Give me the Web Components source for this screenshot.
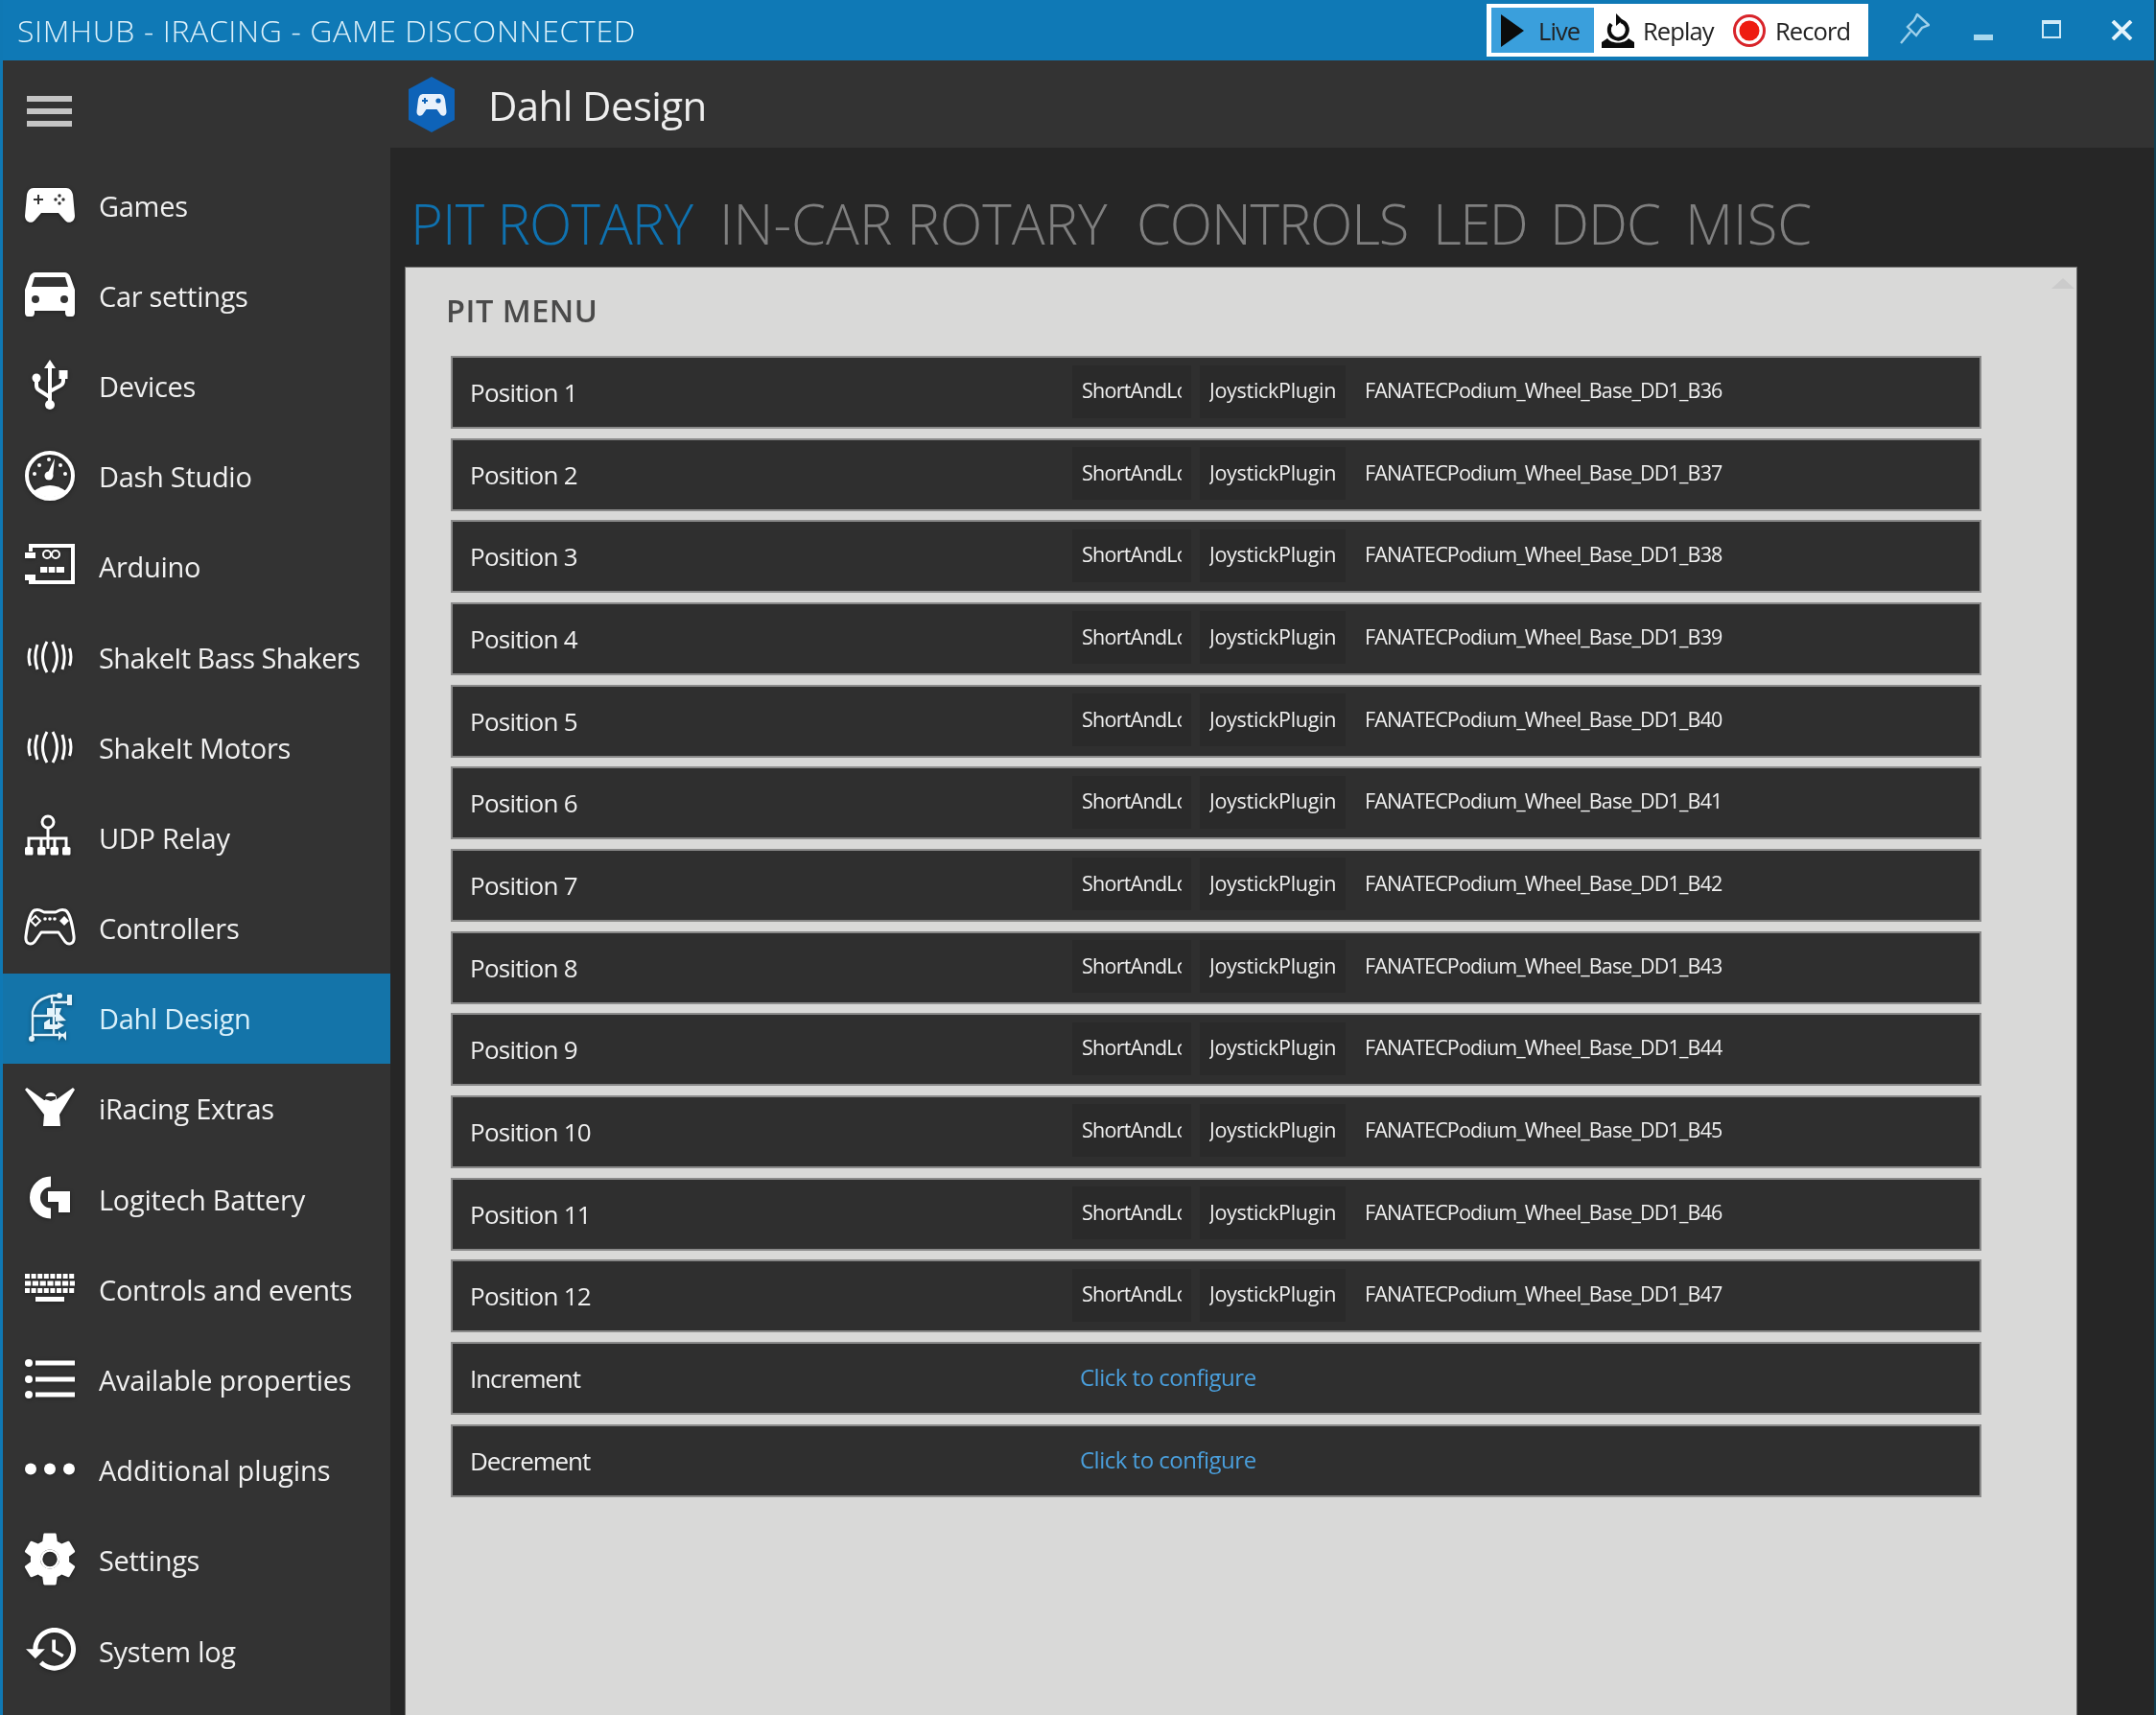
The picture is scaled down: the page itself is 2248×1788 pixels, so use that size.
<!DOCTYPE html>
<html>
<head>
<meta charset="utf-8">
<title>SimHub</title>
<style>
  html, body { margin: 0; padding: 0; background: #262626; overflow: hidden; }
  body { font-family: "Open Sans", "Liberation Sans", sans-serif; }
</style>
</head>
<body>

<sim-app>
  <sim-titlebar slot="top" title-text="SIMHUB - IRACING - GAME DISCONNECTED"></sim-titlebar>

  <sim-sidebar slot="side">
    <sim-nav-item icon="games">Games</sim-nav-item>
    <sim-nav-item icon="car">Car settings</sim-nav-item>
    <sim-nav-item icon="usb">Devices</sim-nav-item>
    <sim-nav-item icon="gauge">Dash Studio</sim-nav-item>
    <sim-nav-item icon="arduino">Arduino</sim-nav-item>
    <sim-nav-item icon="shake" style="letter-spacing:-0.6px">ShakeIt Bass Shakers</sim-nav-item>
    <sim-nav-item icon="shake">ShakeIt Motors</sim-nav-item>
    <sim-nav-item icon="network">UDP Relay</sim-nav-item>
    <sim-nav-item icon="controller">Controllers</sim-nav-item>
    <sim-nav-item icon="dahl" selected>Dahl Design</sim-nav-item>
    <sim-nav-item icon="iracing">iRacing Extras</sim-nav-item>
    <sim-nav-item icon="logitech">Logitech Battery</sim-nav-item>
    <sim-nav-item icon="keyboard">Controls and events</sim-nav-item>
    <sim-nav-item icon="list">Available properties</sim-nav-item>
    <sim-nav-item icon="dots" style="letter-spacing:-0.05px">Additional plugins</sim-nav-item>
    <sim-nav-item icon="gear">Settings</sim-nav-item>
    <sim-nav-item icon="history">System log</sim-nav-item>
  </sim-sidebar>

  <sim-page-header slot="head">Dahl Design</sim-page-header>

  <sim-tabs slot="tabs">
    <span class="active">PIT ROTARY</span>
    <span style="letter-spacing:0">IN-CAR ROTARY</span>
    <span style="letter-spacing:-1.2px">CONTROLS</span>
    <span style="letter-spacing:-1.5px">LED</span>
    <span>DDC</span>
    <span style="letter-spacing:0">MISC</span>
  </sim-tabs>

  <sim-panel slot="panel" heading="PIT MENU">
    <sim-row key="FANATECPodium_Wheel_Base_DD1_B36">Position 1</sim-row>
    <sim-row key="FANATECPodium_Wheel_Base_DD1_B37">Position 2</sim-row>
    <sim-row key="FANATECPodium_Wheel_Base_DD1_B38">Position 3</sim-row>
    <sim-row key="FANATECPodium_Wheel_Base_DD1_B39">Position 4</sim-row>
    <sim-row key="FANATECPodium_Wheel_Base_DD1_B40">Position 5</sim-row>
    <sim-row key="FANATECPodium_Wheel_Base_DD1_B41">Position 6</sim-row>
    <sim-row key="FANATECPodium_Wheel_Base_DD1_B42">Position 7</sim-row>
    <sim-row key="FANATECPodium_Wheel_Base_DD1_B43">Position 8</sim-row>
    <sim-row key="FANATECPodium_Wheel_Base_DD1_B44">Position 9</sim-row>
    <sim-row key="FANATECPodium_Wheel_Base_DD1_B45">Position 10</sim-row>
    <sim-row key="FANATECPodium_Wheel_Base_DD1_B46">Position 11</sim-row>
    <sim-row key="FANATECPodium_Wheel_Base_DD1_B47">Position 12</sim-row>
    <sim-row>Increment</sim-row>
    <sim-row>Decrement</sim-row>
  </sim-panel>
</sim-app>

<script>
// icons are drawn in a 60x60 box, 1 unit = 1px
const BG = '#333333';
const GAMEPAD_BODY = 'M13 12H47C51 12 53 15 54 19L56 41C56 47 50 50 46 46L39 38H21L14 46C10 50 4 47 4 41L6 19C7 15 9 12 13 12Z';

const ICONS = {
  games: `
    <path fill="#fff" d="${GAMEPAD_BODY}"/>
    <path stroke="${BG}" stroke-width="2" d="M18 19V29M13 24H23"/>
    <g fill="${BG}"><circle cx="40" cy="20" r="1.7"/><circle cx="40" cy="28" r="1.7"/><circle cx="36" cy="24" r="1.7"/><circle cx="44" cy="24" r="1.7"/></g>`,
  car: `
    <path fill="#fff" d="M15 6H45C48 6 50 8 51 10L56 24V48C56 50 55 52 53 52H49C47 52 46 50 46 48V46H14V48C14 50 13 52 11 52H7C5 52 4 50 4 48V24L9 10C10 8 12 6 15 6Z"/>
    <path fill="${BG}" d="M14 11H46L49 21H11Z"/>
    <circle cx="15" cy="34" r="4" fill="${BG}"/><circle cx="45" cy="34" r="4" fill="${BG}"/>`,
  usb: `
    <path fill="#fff" d="M30 3L36 12H24Z"/>
    <g fill="none" stroke="#fff" stroke-width="4">
      <path d="M30 10V48"/>
      <path d="M30 42L19 35C17 34 16 32 16 30V24"/>
      <path d="M30 36L41 30C43 29 44 27 44 25V20"/>
    </g>
    <circle cx="30" cy="50" r="5" fill="#fff"/>
    <circle cx="16" cy="22" r="4.5" fill="#fff"/>
    <rect x="39.5" y="14" width="9" height="9" fill="#fff"/>`,
  gauge: `
    <circle cx="30" cy="29" r="24" fill="none" stroke="#fff" stroke-width="4"/>
    <path fill="#fff" d="M13 45Q30 33 47 45Q30 58 13 45Z"/>
    <path fill="#fff" d="M35 11L33 30H26Z"/>
    <circle cx="29" cy="29" r="4.5" fill="#fff"/>
    <g fill="#fff"><circle cx="14" cy="27" r="2"/><circle cx="19" cy="18" r="2"/><circle cx="29" cy="12" r="2"/><circle cx="41" cy="18" r="2"/><circle cx="46" cy="27" r="2"/></g>`,
  arduino: `
    <path fill="none" stroke="#fff" stroke-width="4" d="M10 14V8H54V46H10V40"/>
    <rect x="4" y="15" width="11" height="6" fill="#fff"/>
    <rect x="4" y="38" width="11" height="6" fill="#fff"/>
    <g fill="none" stroke="#fff" stroke-width="2"><circle cx="27" cy="17" r="4"/><circle cx="36" cy="17" r="4"/></g>
    <rect x="20" y="30" width="25" height="6" fill="#fff"/>
    <path stroke="${BG}" stroke-width="1.5" d="M28 30V36M36 30V36"/>`,
  shake: `
    <g fill="none" stroke="#fff" stroke-width="3">
      <path d="M9.5 21Q6.5 30 9.5 39"/><path d="M17 17Q12.5 30 17 43"/><path d="M27 14Q18 30 27 46"/>
      <path d="M33 14Q42 30 33 46"/><path d="M43 17Q47.5 30 43 43"/><path d="M50.5 21Q53.5 30 50.5 39"/>
    </g>`,
  network: `
    <circle cx="28" cy="14" r="6" fill="none" stroke="#fff" stroke-width="3"/>
    <g fill="none" stroke="#fff" stroke-width="3"><path d="M28 20V42"/><path d="M8 42V31H47V42"/><path d="M21 42V31M35 42V31"/></g>
    <g fill="#fff"><rect x="4" y="40" width="8.5" height="8.5" rx="1.5"/><rect x="17" y="40" width="8.5" height="8.5" rx="1.5"/><rect x="30.5" y="40" width="8.5" height="8.5" rx="1.5"/><rect x="43" y="40" width="8.5" height="8.5" rx="1.5"/></g>`,
  controller: `
    <path fill="none" stroke="#fff" stroke-width="3" stroke-linejoin="round" d="M14 11C20 9 22 13 24 13H36C38 13 40 9 46 11C51 13 54 30 55 38C56 46 50 48 46 44L39 34H21L14 44C10 48 4 46 5 38C6 30 9 13 14 11Z"/>
    <path fill="none" stroke="#fff" stroke-width="2" d="M15 17L20 22L15 27L10 22Z"/>
    <path fill="#fff" d="M45 17L50 22L45 27L40 22Z"/>
    <g fill="#fff"><circle cx="25" cy="20" r="1.8"/><circle cx="30" cy="20" r="1.8"/><circle cx="35" cy="20" r="1.8"/></g>`,
  dahl: `
    <g fill="none" stroke="#e6f4fb" stroke-width="2.4">
      <path d="M12 50V23C14 14 22 8 33 6H40"/>
      <path d="M12 47H44"/>
      <path d="M12 27H36"/>
      <path d="M32 7V13H50"/>
      <path d="M34 14V46"/>
    </g>
    <g fill="#e6f4fb">
      <circle cx="40" cy="6" r="3"/>
      <path d="M48 5H53V16H48Z"/>
      <rect x="27" y="19" width="8" height="8"/>
      <path d="M36 19H42L40 25L47 32L36 33Z"/>
      <path d="M24 34L30 30V36H38V33L45 37L38 41H24Z"/>
      <path d="M39 43L43 47L47 43V53L43 48L39 53Z"/>
      <circle cx="11" cy="51" r="3"/>
    </g>`,
  iracing: `
    <path fill="#fff" d="M4 10L6 8L24 21H36L54 8L56 10L40 36L41 48H23L24 36Z"/>
    <circle cx="31" cy="19" r="6" fill="#fff"/>
    <path fill="${BG}" d="M25 17H36V20L31 22L25 20Z"/>`,
  logitech: `
    <path fill="none" stroke="#fff" stroke-width="11" d="M31 12A16.5 16.5 0 0 0 31 45"/>
    <path fill="#fff" d="M28 22H51V44H39V33H28Z"/>`,
  keyboard: `
    <g fill="none" stroke="#fff" stroke-width="5">
      <path stroke-dasharray="5 1.6" d="M4 16.5H56"/>
      <path stroke-dasharray="6.2 1.6" d="M4 24H56"/>
      <path stroke-dasharray="5 1.6" d="M4 31.5H56"/>
      <path d="M15 40.5H45"/>
    </g>`,
  list: `
    <g fill="#fff"><circle cx="8" cy="12" r="4"/><circle cx="8" cy="29" r="4"/><circle cx="8" cy="45" r="4"/>
    <rect x="15" y="9.5" width="41" height="5"/><rect x="15" y="26.5" width="41" height="5"/><rect x="15" y="42.5" width="41" height="5"/></g>`,
  dots: `
    <g fill="#fff"><circle cx="10" cy="28.5" r="6"/><circle cx="30" cy="28.5" r="6"/><circle cx="50" cy="28.5" r="6"/></g>`,
  gear: `
    <path fill="#fff" transform="translate(-3.6 -5.1) scale(2.8)" d="M19.14 12.94c.04-.3.06-.61.06-.94 0-.32-.02-.64-.07-.94l2.03-1.58c.18-.14.23-.41.12-.61l-1.92-3.32c-.12-.22-.37-.29-.59-.22l-2.39.96c-.5-.38-1.03-.7-1.62-.94l-.36-2.54c-.04-.24-.24-.41-.48-.41h-3.84c-.24 0-.43.17-.47.41l-.36 2.54c-.59.24-1.13.57-1.62.94l-2.39-.96c-.22-.08-.47 0-.59.22L2.74 8.87c-.12.21-.08.47.12.61l2.03 1.58c-.05.3-.09.63-.09.94s.02.64.07.94l-2.03 1.58c-.18.14-.23.41-.12.61l1.92 3.32c.12.22.37.29.59.22l2.39-.96c.5.38 1.03.7 1.62.94l.36 2.54c.05.24.24.41.48.41h3.84c.24 0 .44-.17.47-.41l.36-2.54c.59-.24 1.13-.56 1.62-.94l2.39.96c.22.08.47 0 .59-.22l1.92-3.32c.12-.22.07-.47-.12-.61l-2.01-1.58zM12 15.6c-1.98 0-3.6-1.62-3.6-3.6s1.62-3.6 3.6-3.6 3.6 1.62 3.6 3.6-1.62 3.6-3.6 3.6z"/>
    <circle cx="30" cy="28.5" r="8.9" fill="none" stroke="#fff" stroke-width="2.4"/>`,
  history: `
    <path fill="#fff" transform="translate(2.52 -1.44) scale(2.48)" d="M13 3c-4.97 0-9 4.03-9 9H1l3.89 3.89.07.14L9 12H6c0-3.87 3.13-7 7-7s7 3.13 7 7-3.13 7-7 7c-1.93 0-3.68-.79-4.94-2.06l-1.42 1.42C8.27 19.99 10.51 21 13 21c4.97 0 9-4.03 9-9s-4.03-9-9-9zm-1 5v5l4.28 2.54.72-1.21-3.5-2.08V8H12z"/>`
};

class SimApp extends HTMLElement {
  constructor() {
    super();
    this.attachShadow({ mode: 'open' }).innerHTML = `
      <style>
        :host {
          display: grid;
          width: 2248px;
          height: 1788px;
          box-sizing: border-box;
          border-left: 3px solid #0f78b4;
          border-right: 2px solid #123f52;
          grid-template-columns: 404px 1fr;
          grid-template-rows: 63px 91px 124px 1fr;
          background: #262626;
          overflow: hidden;
          filter: blur(0.5px);
        }
        ::slotted([slot="top"]) { grid-column: 1 / 3; margin-left: -3px; margin-right: -2px; }
        ::slotted([slot="side"]) { grid-row: 2 / 5; }
      </style>
      <slot name="top"></slot>
      <slot name="side"></slot>
      <slot name="head"></slot>
      <slot name="tabs"></slot>
      <slot name="panel"></slot>
    `;
  }
}

class SimTitlebar extends HTMLElement {
  connectedCallback() {
    this.attachShadow({ mode: 'open' }).innerHTML = `
      <style>
        :host { display: flex; align-items: center; height: 63px; background: #0f79b6; color: #dff2fb; }
        .title { flex: 1; padding-left: 18px; font-size: 32px; font-weight: 350; letter-spacing: 0.62px; white-space: nowrap; }
        .modes {
          display: flex; align-items: center; width: 398px; height: 55px; box-sizing: border-box;
          background: #fff; padding: 4px 5px; color: #222; font-size: 25.5px; letter-spacing: -0.9px;
        }
        .mode { display: flex; align-items: center; height: 47px; }
        .live { width: 107px; background: #3a9fdc; box-sizing: border-box; padding-left: 10px; gap: 15px; }
        .replay { margin-left: 8px; gap: 9px; width: 137px; }
        .record { gap: 10px; }
        .win { display: flex; width: 300px; height: 63px; position: relative; }
        svg { display: block; flex: none; }
      </style>
      <div class="title">${this.getAttribute('title-text')}</div>
      <div class="modes">
        <div class="mode live">
          <svg width="24" height="34" viewBox="0 0 24 34"><path fill="#0b0b0b" d="M0 0L24 17L0 34Z"/></svg>
          <span>Live</span>
        </div>
        <div class="mode replay">
          <svg width="34" height="36" viewBox="0 0 34 36">
            <path fill="none" stroke="#0b0b0b" stroke-width="4" d="M10 11A9.5 9.5 0 1 0 20 8"/>
            <path fill="#0b0b0b" d="M15 0L22 7L15 13Z"/>
            <path fill="#0b0b0b" d="M0 36V30L6 26C10 32 24 32 28 26L34 30V36Z"/>
          </svg>
          <span>Replay</span>
        </div>
        <div class="mode record">
          <svg width="34" height="36" viewBox="0 0 34 36">
            <circle cx="17" cy="18" r="15.5" fill="none" stroke="#d8242a" stroke-width="3"/>
            <circle cx="17" cy="18" r="10.5" fill="#ee1c10"/>
          </svg>
          <span>Record</span>
        </div>
      </div>
      <div class="win">
        <svg style="margin-left:32px;margin-top:14px" width="32" height="32" viewBox="0 0 32 32">
          <path fill="none" stroke="#9fd0ea" stroke-width="2.4" d="M19 1L31 12L24 15L18 23L9 14L16 7ZM12 19L2 31"/>
        </svg>
        <svg style="margin-left:46px;margin-top:36px" width="20" height="6" viewBox="0 0 20 6"><rect width="20" height="6" fill="#a8d8ee"/></svg>
        <svg style="margin-left:51px;margin-top:21px" width="20" height="19" viewBox="0 0 20 19">
          <path fill="none" stroke="#cfeaf7" stroke-width="2" d="M1 1H19V18H1Z"/><rect width="20" height="4" fill="#cfeaf7"/>
        </svg>
        <svg style="margin-left:52px;margin-top:21px" width="23" height="21" viewBox="0 0 23 21">
          <path fill="none" stroke="#e4f3fb" stroke-width="4" d="M2 1L21 20M21 1L2 20"/>
        </svg>
      </div>
    `;
  }
}

class SimSidebar extends HTMLElement {
  constructor() {
    super();
    this.attachShadow({ mode: 'open' }).innerHTML = `
      <style>
        :host { display: block; background: #333333; overflow: hidden; }
        .burger { display: flex; flex-direction: column; gap: 7px; width: 47px; margin-left: 25px; padding: 37px 0 35px; }
        .burger i { display: block; height: 6px; background: #c4c4c4; }
      </style>
      <div class="burger"><i></i><i></i><i></i></div>
      <slot></slot>
    `;
  }
}

class SimNavItem extends HTMLElement {
  connectedCallback() {
    const icon = ICONS[this.getAttribute('icon')] || '';
    this.attachShadow({ mode: 'open' }).innerHTML = `
      <style>
        :host {
          display: flex; align-items: center; gap: 21px;
          height: 94.2px; padding-left: 19px;
          color: #f1f1f1; font-size: 29px; letter-spacing: -0.3px; white-space: nowrap;
        }
        :host([selected]) { background: #1474a9; color: #d9f0fa; }
        svg { display: block; flex: none; filter: drop-shadow(0 1px 2px rgba(0,0,0,.35)); }
      </style>
      <svg width="60" height="60" viewBox="0 0 60 60">${icon}</svg>
      <span><slot></slot></span>
    `;
  }
}

class SimPageHeader extends HTMLElement {
  constructor() {
    super();
    this.attachShadow({ mode: 'open' }).innerHTML = `
      <style>
        :host {
          display: flex; align-items: center; height: 91px; background: #333333;
          color: #eeeeee; font-size: 42px; letter-spacing: -0.6px; padding-left: 19px; gap: 35px;
        }
        svg { display: block; flex: none; }
        span { padding-top: 2px; }
      </style>
      <svg width="48" height="58" viewBox="0 0 48 58">
        <path fill="#0e63b8" d="M24 0L48 13V45L24 58L0 45V13Z"/>
        <path fill="#e8f1fb" d="M16 18H32C36 18 37 20 38 24L39.5 36C40 41 35 42 33 39L29.5 34H18.5L15 39C13 42 8 41 8.5 36L10 24C11 20 12 18 16 18Z"/>
        <path stroke="#0e63b8" stroke-width="2" d="M17 22V28M14 25H20"/>
        <circle cx="31" cy="25" r="2.6" fill="#0e63b8"/>
      </svg>
      <span><slot></slot></span>
    `;
  }
}

class SimTabs extends HTMLElement {
  constructor() {
    super();
    this.attachShadow({ mode: 'open' }).innerHTML = `
      <style>
        :host {
          display: grid; grid-template-columns: 322px 435px 309px 122px 141px 1fr;
          align-items: start; padding: 46px 0 0 21px; height: 124px; box-sizing: border-box;
          font-size: 58px; font-weight: 350; letter-spacing: -0.9px; line-height: 66px;
          color: #7f7f7f; white-space: nowrap;
        }
        ::slotted(.active) { color: #0f72b0; }
      </style>
      <slot></slot>
    `;
  }
}

class SimPanel extends HTMLElement {
  connectedCallback() {
    this.attachShadow({ mode: 'open' }).innerHTML = `
      <style>
        :host {
          display: block; position: relative; width: 1744px; margin-left: 15px; box-sizing: border-box;
          background: #d9d9d8; border: 1px solid #6d6d6d; border-bottom: 0;
          padding: 24px 0 0 47px; overflow: hidden;
        }
        h2 { margin: 0 0 27px -5px; font-size: 32.5px; font-weight: 600; line-height: 41px; color: #4a4a4a; letter-spacing: 0.5px; }
        .rows { display: flex; flex-direction: column; gap: 9.67px; width: 1596px; }
        .up {
          position: absolute; right: 2px; top: 11px; width: 0; height: 0;
          border: 12px solid transparent; border-top: 0; border-bottom: 11px solid #cbcbcb;
        }
      </style>
      <h2>${this.getAttribute('heading')}</h2>
      <div class="rows"><slot></slot></div>
      <div class="up"></div>
    `;
  }
}

class SimChip extends HTMLElement {
  constructor() {
    super();
    this.attachShadow({ mode: 'open' }).innerHTML = `
      <style>
        :host {
          display: flex; align-items: center; height: 55px; box-sizing: border-box;
          background: #2a2a2a; padding: 0 10px;
        }
        span { display: block; overflow: hidden; white-space: nowrap; flex: 1; padding-bottom: 3px; }
      </style>
      <span><slot></slot></span>
    `;
  }
}
customElements.define('sim-chip', SimChip);

class SimRow extends HTMLElement {
  connectedCallback() {
    const key = this.getAttribute('key');
    const binding = key
      ? `<sim-chip class="mode">ShortAndLo</sim-chip>
         <sim-chip class="plugin">JoystickPlugin</sim-chip>
         <span class="key">${key}</span>`
      : `<span class="link">Click to configure</span>`;
    this.attachShadow({ mode: 'open' }).innerHTML = `
      <style>
        :host {
          display: flex; align-items: center; height: 76px; box-sizing: border-box;
          background: #2f2f2f; border: 2px solid #8a8a8a; color: #f0f0f0;
          font-size: 26px; letter-spacing: -1.1px; padding-left: 18px;
        }
        :host([key]) { letter-spacing: -0.75px; }
        .label { width: 628px; flex: none; }
        .binding { display: flex; align-items: center; font-size: 21.5px; letter-spacing: -0.75px; margin-top: -2px; }
        .mode { width: 124px; }
        .plugin { width: 152px; margin-left: 9px; letter-spacing: -0.3px; }
        .key { margin-left: 20px; white-space: nowrap; letter-spacing: -0.85px; padding-bottom: 3px; }
        .link { margin-left: 8px; color: #4a9fdc; font-size: 24px; letter-spacing: -0.5px; }
      </style>
      <span class="label"><slot></slot></span>
      <div class="binding">${binding}</div>
    `;
  }
}

customElements.define('sim-titlebar', SimTitlebar);
customElements.define('sim-sidebar', SimSidebar);
customElements.define('sim-nav-item', SimNavItem);
customElements.define('sim-page-header', SimPageHeader);
customElements.define('sim-tabs', SimTabs);
customElements.define('sim-panel', SimPanel);
customElements.define('sim-row', SimRow);
customElements.define('sim-app', SimApp);
</script>
</body>
</html>
